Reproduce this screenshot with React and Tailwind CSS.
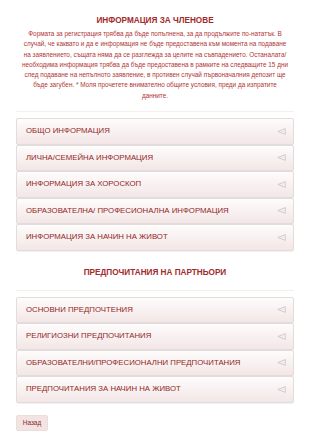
import React from 'react';

const memberSections = [
  'ОБЩО ИНФОРМАЦИЯ',
  'ЛИЧНА/СЕМЕЙНА ИНФОРМАЦИЯ',
  'ИНФОРМАЦИЯ ЗА ХОРОСКОП',
  'ОБРАЗОВАТЕЛНА/ ПРОФЕСИОНАЛНА ИНФОРМАЦИЯ',
  'ИНФОРМАЦИЯ ЗА НАЧИН НА ЖИВОТ',
];

const partnerSections = [
  'ОСНОВНИ ПРЕДПОЧТЕНИЯ',
  'РЕЛИГИОЗНИ ПРЕДПОЧИТАНИЯ',
  'ОБРАЗОВАТЕЛНИ/ПРОФЕСИОНАЛНИ ПРЕДПОЧИТАНИЯ',
  'ПРЕДПОЧИТАНИЯ ЗА НАЧИН НА ЖИВОТ',
];

const Row = ({ label }) => (
  <div className="h-[26.5px] flex items-center justify-between pl-[9px] pr-[7px] border border-[#e2dcdc] rounded-[2px] bg-gradient-to-b from-[#fefcfc] to-[#f3e6e6] shadow-[0_1px_1px_rgba(0,0,0,0.06)]">
    <span className="text-[7.8px] text-[#922626]">{label}</span>
    <svg width="9" height="7" viewBox="0 0 9 7">
      <path d="M8.3 0.6 L0.8 3.5 L8.3 6.4 Z" fill="#f4eded" stroke="#cdc4c4" strokeWidth="0.8" strokeLinejoin="round" />
    </svg>
  </div>
);

export default function App() {
  return (
    <div className="w-[310px] h-[440px] bg-white overflow-hidden font-['Liberation_Sans',Arial,sans-serif]">
      <div className="pt-[15px] px-[16px]">
        <h2 className="text-center text-[8.2px] font-bold text-[#a32a2a] leading-[12px]">ИНФОРМАЦИЯ ЗА ЧЛЕНОВЕ</h2>
        <p className="mt-[2px] px-[4px] text-center text-[6.4px] leading-[10.3px] text-[#b23535]">
          Формата за регистрация трябва да бъде попълнена, за да продължите по-нататък. В случай, че каквато и да е информация не бъде предоставена към момента на подаване на заявлението, същата няма да се разглежда за целите на съвпадението. Останалата/ необходима информация трябва да бъде предоставена в рамките на следващите 15 дни след подаване на непълното заявление, в противен случай първоначалния депозит ще бъде загубен. * Моля прочетете внимателно общите условия, преди да изпратите данните.
        </p>
        <div className="mt-[10px] h-[1px] bg-[#f3f0f0]" />
        <div className="mt-[6px] flex flex-col">
          {memberSections.map((s) => (
            <Row key={s} label={s} />
          ))}
        </div>

        <h2 className="mt-[16px] text-center text-[8.2px] font-bold text-[#a32a2a] leading-[12px]">ПРЕДПОЧИТАНИЯ НА ПАРТНЬОРИ</h2>
        <div className="mt-[11px] h-[1px] bg-[#f3f0f0]" />
        <div className="mt-[6px] flex flex-col">
          {partnerSections.map((s) => (
            <Row key={s} label={s} />
          ))}
        </div>

        <button className="mt-[12px] h-[16px] w-[32px] rounded-[2px] bg-[#f3e4e4] border border-[#ecdcdc] text-[6.4px] text-[#8c1f1f] flex items-center justify-center">
          Назад
        </button>
      </div>
    </div>
  );
}
